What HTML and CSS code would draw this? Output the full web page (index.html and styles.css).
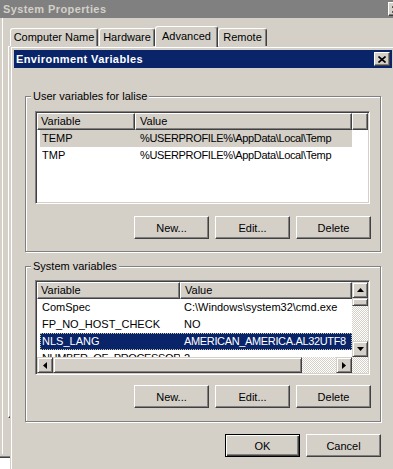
FILE: index.html
```html
<!DOCTYPE html>
<html lang="en">
<head>
    <meta charset="UTF-8">
    <meta name="viewport" content="width=device-width, initial-scale=1.0">
    <title>Environment Variables</title>
    <link rel="stylesheet" href="styles.css">
</head>
<body>
<div class="desktop">

    <!-- System Properties window (behind the dialog) -->
    <div class="window sysprops">
        <div class="titlebar inactive">
            <span class="title">System Properties</span>
            <span class="title-btn">
                <svg width="8" height="7" viewBox="0 0 8 7"><path d="M0.5 0.5l7 6M7.5 0.5l-7 6" stroke="#000" stroke-width="1.6"/></svg>
            </span>
        </div>
        <div class="sp-client">
            <div class="tabs">
                <div class="tab tab-computer">Computer Name</div>
                <div class="tab tab-hardware">Hardware</div>
                <div class="tab tab-advanced active">Advanced</div>
                <div class="tab tab-remote">Remote</div>
            </div>
            <div class="tab-panel"></div>
        </div>
    </div>

    <!-- Environment Variables dialog -->
    <div class="window envdlg">
        <div class="titlebar">
            <span class="title">Environment Variables</span>
            <span class="title-btn">
                <svg width="8" height="7" viewBox="0 0 8 7"><path d="M0.5 0.5l7 6M7.5 0.5l-7 6" stroke="#000" stroke-width="1.6"/></svg>
            </span>
        </div>
        <div class="client">

            <div class="group group-user">
                <span class="group-title">User variables for lalise</span>
                <div class="listview user-list">
                    <div class="lv-header">
                        <div class="lv-col c-var">Variable</div>
                        <div class="lv-col c-val">Value</div>
                        <div class="lv-col c-fill"></div>
                    </div>
                    <div class="lv-row sel-inactive">
                        <span class="cell c-var">TEMP</span>
                        <span class="cell c-val caps">%USERPROFILE%\AppData\Local\Temp</span>
                    </div>
                    <div class="lv-row">
                        <span class="cell c-var">TMP</span>
                        <span class="cell c-val caps">%USERPROFILE%\AppData\Local\Temp</span>
                    </div>
                </div>
                <div class="btn-row">
                    <button class="btn">New...</button>
                    <button class="btn">Edit...</button>
                    <button class="btn">Delete</button>
                </div>
            </div>

            <div class="group group-sys">
                <span class="group-title">System variables</span>
                <div class="listview sys-list">
                    <div class="lv-main">
                        <div class="lv-content">
                            <div class="lv-header">
                                <div class="lv-col c-var">Variable</div>
                                <div class="lv-col c-val">Value</div>
                            </div>
                            <div class="lv-row">
                                <span class="cell c-var">ComSpec</span>
                                <span class="cell c-val">C:\Windows\system32\cmd.exe</span>
                            </div>
                            <div class="lv-row">
                                <span class="cell c-var">FP_NO_HOST_CHECK</span>
                                <span class="cell c-val">NO</span>
                            </div>
                            <div class="lv-row selected">
                                <span class="cell c-var">NLS_LANG</span>
                                <span class="cell c-val caps">AMERICAN_AMERICA.AL32UTF8</span>
                            </div>
                            <div class="lv-row">
                                <span class="cell c-var caps">NUMBER_OF_PROCESSORS</span>
                                <span class="cell c-val">2</span>
                            </div>
                        </div>
                        <div class="vscroll">
                            <div class="sb-btn">
                                <svg width="7" height="4" viewBox="0 0 7 4"><polygon points="3.5,0 7,4 0,4" fill="#000"/></svg>
                            </div>
                            <div class="sb-thumb v-thumb"></div>
                            <div class="sb-track"></div>
                            <div class="sb-btn">
                                <svg width="7" height="4" viewBox="0 0 7 4"><polygon points="0,0 7,0 3.5,4" fill="#000"/></svg>
                            </div>
                        </div>
                    </div>
                    <div class="hscroll-row">
                        <div class="hscroll">
                            <div class="sb-btn">
                                <svg width="4" height="7" viewBox="0 0 4 7"><polygon points="4,0 4,7 0,3.5" fill="#000"/></svg>
                            </div>
                            <div class="sb-thumb h-thumb"></div>
                            <div class="sb-track"></div>
                            <div class="sb-btn">
                                <svg width="4" height="7" viewBox="0 0 4 7"><polygon points="0,0 4,3.5 0,7" fill="#000"/></svg>
                            </div>
                        </div>
                        <div class="sb-corner"></div>
                    </div>
                </div>
                <div class="btn-row">
                    <button class="btn">New...</button>
                    <button class="btn">Edit...</button>
                    <button class="btn">Delete</button>
                </div>
            </div>

            <div class="dlg-buttons">
                <button class="btn default">OK</button>
                <button class="btn">Cancel</button>
            </div>
        </div>
    </div>

</div>
</body>
</html>
```

FILE: styles.css
```css
* {
    box-sizing: border-box;
}
body {
    margin: 0;
    background-color: #fff;
    font-family: "Liberation Sans", Arial, sans-serif;
    font-size: 11px;
    color: #000;
}
.desktop {
    position: relative;
    width: 393px;
    height: 469px;
    overflow: hidden;
}

/* classic window frame */
.window {
    position: absolute;
    display: flex;
    flex-direction: column;
    background-color: #d4d0c8;
    border: 1px solid;
    border-color: #d4d0c8 #404040 #404040 #d4d0c8;
    box-shadow: inset 1px 1px #fff, inset -1px -1px #808080;
    padding: 3px;
}
.sysprops {
    left: -4px;
    top: -4px;
    width: 414px;
    height: 462px;
}
.envdlg {
    left: 10px;
    top: 46px;
    width: 386px;
    height: 430px;
}
.titlebar {
    height: 18px;
    flex: none;
    display: flex;
    align-items: center;
    justify-content: space-between;
    background-color: #0a246a;
    color: #fff;
    padding-left: 2px;
}
.titlebar.inactive {
    background-color: #808080;
    color: #d4d0c8;
    padding-left: 3px;
}
.title {
    font-weight: bold;
    letter-spacing: 0.4px;
}
.title-btn {
    width: 16px;
    height: 14px;
    margin-right: 2px;
    display: flex;
    align-items: center;
    justify-content: center;
    background-color: #d4d0c8;
    border: 1px solid;
    border-color: #fff #404040 #404040 #fff;
    box-shadow: inset -1px -1px #808080;
}

/* System Properties tabs */
.sp-client {
    flex: 1;
    margin-left: 2px;
    border-left: 1px solid #fff;
}
.tabs {
    display: flex;
    align-items: flex-end;
    height: 28px;
    padding-left: 7px;
}
.tab {
    height: 18px;
    line-height: 16px;
    text-align: center;
    white-space: nowrap;
    border: 1px solid;
    border-bottom: none;
    border-color: #fff #404040 transparent #fff;
    border-radius: 3px 3px 0 0;
    box-shadow: inset -1px 0 #808080;
}
.tab.active {
    position: relative;
    z-index: 1;
    height: 21px;
    margin-bottom: -1px;
    line-height: 18px;
    background-color: #d4d0c8;
}
.tab-computer { width: 88px; }
.tab-hardware { width: 56px; margin-left: 1px; }
.tab-advanced { width: 63px; }
.tab-remote { width: 49px; }
.tab-panel {
    height: 372px;
    margin-left: 5px;
    border-top: 1px solid #fff;
    border-left: 1px solid #fff;
    border-bottom: 1px solid #404040;
    box-shadow: inset 0 -1px #808080;
}

/* Environment Variables dialog body */
.client {
    padding: 0 11px;
}
.group {
    border: 1px solid #808080;
    box-shadow: inset 1px 1px #fff, 1px 1px #fff;
}
.group-user {
    margin-top: 28px;
}
.group-sys {
    margin-top: 14px;
}
.group-title {
    display: block;
    width: max-content;
    height: 13px;
    line-height: 13px;
    margin: -7px 0 0 5px;
    padding: 0 2px;
    background-color: #d4d0c8;
}

/* list views */
.listview {
    width: 335px;
    margin-left: 9px;
    background-color: #fff;
    border: 1px solid;
    border-color: #808080 #fff #fff #808080;
    box-shadow: inset 1px 1px #404040, inset -1px -1px #d4d0c8;
    padding: 1px;
    overflow: hidden;
}
.user-list {
    height: 93px;
    margin-top: 8px;
}
.sys-list {
    height: 95px;
    margin-top: 7px;
    display: flex;
    flex-direction: column;
}
.lv-header {
    display: flex;
    height: 17px;
}
.lv-col {
    height: 17px;
    line-height: 15px;
    padding-left: 3px;
    white-space: nowrap;
    overflow: hidden;
    background-color: #d4d0c8;
    border: 1px solid;
    border-color: #fff #404040 #404040 #fff;
    box-shadow: inset -1px -1px #808080;
}
.lv-col.c-val {
    padding-left: 4px;
}
.user-list .lv-col.c-var { width: 98px; }
.user-list .lv-col.c-val { width: 217px; }
.lv-col.c-fill { flex: 1; }
.sys-list .lv-col.c-var { width: 143px; }
.sys-list .lv-col.c-val { flex: 1; }

.lv-row {
    display: flex;
    width: 312px;
    height: 17px;
    line-height: 17px;
    margin-left: 3px;
    white-space: nowrap;
}
.cell {
    overflow: hidden;
}
.cell.caps {
    letter-spacing: -0.35px;
}
.user-list .cell.c-var { width: 95px; padding-left: 2px; }
.user-list .cell.c-val { width: 217px; padding-left: 5px; }
.sys-list .cell.c-var { width: 140px; padding-left: 2px; }
.sys-list .cell.c-val { width: 172px; padding-left: 4px; }
.lv-row.sel-inactive {
    background-color: #d4d0c8;
}
.lv-row.selected {
    background-color: #0a246a;
    color: #fff;
    outline: 1px dotted #c8c4a0;
    outline-offset: -1px;
}

/* scroll bars */
.lv-main {
    flex: 1;
    display: flex;
    min-height: 0;
}
.lv-content {
    flex: 1;
    overflow: hidden;
}
.vscroll {
    width: 16px;
    display: flex;
    flex-direction: column;
}
.hscroll-row {
    height: 16px;
    flex: none;
    display: flex;
}
.hscroll {
    flex: 1;
    display: flex;
}
.sb-btn,
.sb-thumb {
    flex: none;
    width: 16px;
    height: 16px;
    display: flex;
    align-items: center;
    justify-content: center;
    background-color: #d4d0c8;
    border: 1px solid;
    border-color: #d4d0c8 #404040 #404040 #d4d0c8;
    box-shadow: inset 1px 1px #fff, inset -1px -1px #808080;
}
.v-thumb {
    height: 8px;
}
.h-thumb {
    width: 249px;
}
.sb-track,
.sb-corner {
    flex: 1;
    background: repeating-conic-gradient(#d4d0c8 0 25%, #fff 0 50%) 0 0 / 2px 2px;
}
.sb-corner {
    flex: none;
    width: 16px;
}

/* buttons */
.btn-row {
    display: flex;
    justify-content: flex-end;
    gap: 6px;
    padding-right: 9px;
}
.group-user .btn-row {
    margin: 12px 0 12px;
}
.group-sys .btn-row {
    margin: 10px 0 13px;
}
.btn {
    width: 75px;
    height: 23px;
    padding: 0;
    font-family: inherit;
    font-size: 11px;
    color: #000;
    background-color: #d4d0c8;
    border: 1px solid;
    border-color: #fff #404040 #404040 #fff;
    box-shadow: inset -1px -1px #808080;
}
.btn.default {
    border-color: #000;
    box-shadow: inset 1px 1px #fff, inset -1px -1px #404040, inset -2px -2px #808080;
}
.dlg-buttons {
    display: flex;
    justify-content: flex-end;
    gap: 6px;
    margin-top: 12px;
}
```
